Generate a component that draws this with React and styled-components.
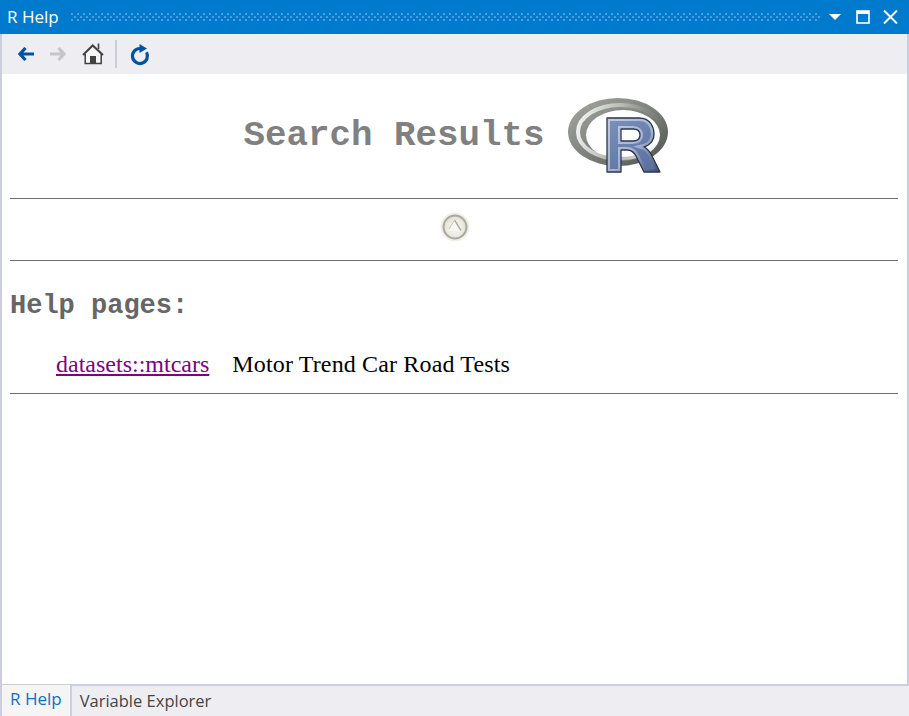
import React from "react";
import styled, { createGlobalStyle } from "styled-components";

const Global = createGlobalStyle`
  html, body { margin: 0; padding: 0; background: #fff; }
  #root { width: 909px; height: 716px; overflow: hidden; }
`;

const Window = styled.div`
  width: 909px;
  height: 716px;
  display: flex;
  flex-direction: column;
  background: #eeeef2;
  font-family: "Open Sans", "Noto Sans", sans-serif;
`;

const TitleBar = styled.div`
  height: 34px;
  flex: none;
  background: #007acc;
  color: #fff;
  display: flex;
  align-items: center;
  padding: 0 11px 0 7px;
  box-sizing: border-box;
`;

const TitleText = styled.div`
  font-size: 17px;
  line-height: 34px;
  margin-right: 12px;
`;

const Grip = styled.div`
  flex: 1;
  height: 9px;
  margin-right: 8px;
  background-image:
    conic-gradient(from 0deg at 2px 2px, transparent 75%, #46a0dc 0),
    conic-gradient(from 0deg at 2px 2px, transparent 75%, #46a0dc 0);
  background-size: 6px 6px, 6px 6px;
  background-position: 0 0, 3px 3px;
`;

const WinButtons = styled.div`
  display: flex;
  align-items: center;
`;

const WinButton = styled.svg`
  display: block;
  margin-left: ${(p) => p.$gap || 0}px;
`;

const Toolbar = styled.div`
  height: 40px;
  flex: none;
  display: flex;
  align-items: center;
  padding-left: 16px;
  border-left: 2px solid #ccceDB;
  border-right: 2px solid #ccceDB;
  box-sizing: border-box;
`;

const ToolIcon = styled.div`
  display: flex;
  align-items: center;
  margin-right: ${(p) => p.$gap || 0}px;
`;

const ToolSep = styled.div`
  width: 2px;
  height: 28px;
  background: #ccceDB;
  margin-right: 13px;
`;

const Content = styled.div`
  flex: 1;
  background: #fff;
  border-left: 2px solid #ccceDB;
  border-right: 2px solid #ccceDB;
  padding: 0 9px 0 8px;
  box-sizing: border-box;
`;

const Header = styled.div`
  height: 124px;
  display: flex;
  align-items: flex-start;
  justify-content: center;
  gap: 22px;
  padding-left: 4px;
  box-sizing: border-box;
`;

const Title = styled.h1`
  margin: 42px 0 0;
  font: bold 35.85px/40px "Liberation Mono", monospace;
  color: #808080;
`;

const LogoWrap = styled.div`
  margin-top: 23px;
  width: 102px;
  height: 80px;
`;

const Rule = styled.hr`
  margin: 0;
  border: 0;
  height: 1px;
  background: #6e6e6e;
`;

const TopRow = styled.div`
  height: 61px;
  display: flex;
  align-items: center;
  justify-content: center;
  padding-left: 2px;
  padding-bottom: 5px;
  box-sizing: border-box;
`;

const BadgeIcon = styled.svg`
  display: block;
  filter: blur(0.6px);
`;

const SectionTitle = styled.h2`
  margin: 0;
  padding-top: 29px;
  font: bold 27px/32px "Liberation Mono", monospace;
  color: #666;
`;

const ResultRow = styled.div`
  display: flex;
  padding: 26px 0 0 46px;
  height: 71px;
  box-sizing: border-box;
  font: 24px/32px "Liberation Serif", serif;
  color: #000;
`;

const ResultLink = styled.a`
  color: #800080;
  text-decoration: underline;
  margin-right: 23px;
`;

const ResultText = styled.span`
  letter-spacing: 0.15px;
`;

const Tabs = styled.div`
  height: 32px;
  flex: none;
  display: flex;
  border-top: 2px solid #ccceDB;
  border-left: 2px solid #ccceDB;
  box-sizing: border-box;
  background: #eeeef2;
`;

const ActiveTab = styled.div`
  font-size: 17px;
  line-height: 27px;
  margin-top: -1px;
  padding: 0 8px;
  color: #0e70c0;
  background: #f5f5f5;
  border-right: 2px solid #ccceDB;
`;

const Tab = styled.div`
  font-size: 16.5px;
  line-height: 30px;
  padding-left: 8px;
  color: #444;
`;

const R_PATH =
  "M40 21 L72 21 C84 21 87 31 87 37 C87 45 81 49 77 50 C80 51 82 54 84 57 L93 75 L77 75 L69 59 C67 55 65 53 60 53 L54 53 L54 75 L40 75 Z M54 32 L54 44 L66 44 C71 44 73 41 73 38 C73 35 71 32 66 32 Z";

const RLogo = () => (
  <svg width="102" height="80" viewBox="0 0 102 80">
    <defs>
      <linearGradient id="ring" x1="0" y1="0" x2="1" y2="1">
        <stop offset="0" stopColor="#a6a8a2" />
        <stop offset="0.5" stopColor="#7f817c" />
        <stop offset="1" stopColor="#4e504c" />
      </linearGradient>
      <linearGradient id="ringIn" x1="0" y1="0.3" x2="1" y2="0.5">
        <stop offset="0" stopColor="#f2f2f0" />
        <stop offset="0.45" stopColor="#b8bab6" />
        <stop offset="0.8" stopColor="#8a8c88" stopOpacity="0.4" />
        <stop offset="1" stopColor="#8a8c88" stopOpacity="0" />
      </linearGradient>
      <linearGradient id="rFill" x1="0" y1="0" x2="0.6" y2="1">
        <stop offset="0" stopColor="#7c92bc" />
        <stop offset="1" stopColor="#5c73a2" />
      </linearGradient>
      <linearGradient id="rEdge" x1="0" y1="0" x2="1" y2="1">
        <stop offset="0" stopColor="#c2cde2" />
        <stop offset="0.55" stopColor="#a4b2cf" />
        <stop offset="1" stopColor="#3e4d72" />
      </linearGradient>
      <clipPath id="rClip">
        <path clipRule="evenodd" d={R_PATH} />
      </clipPath>
    </defs>
    <path
      fillRule="evenodd"
      fill="url(#ring)"
      d="M1 35 A50 34 0 1 1 101 35 A50 34 0 1 1 1 35 Z M19 38 A37 25 0 1 0 93 38 A37 25 0 1 0 19 38 Z"
    />
    <ellipse cx="53" cy="35" rx="42" ry="27" fill="none" stroke="url(#ringIn)" strokeWidth="4" />
    <path fillRule="evenodd" fill="url(#rFill)" d={R_PATH} />
    <path clipPath="url(#rClip)" fill="none" stroke="url(#rEdge)" strokeWidth="6" d={R_PATH} />
    <path fill="none" stroke="#2a3550" strokeWidth="1.3" strokeLinejoin="round" d={R_PATH} />
  </svg>
);

const TopBadge = () => (
  <BadgeIcon width="30" height="30" viewBox="0 0 30 30">
    <defs>
      <radialGradient id="badge" cx="0.5" cy="0.55" r="0.55">
        <stop offset="0" stopColor="#f8f8f2" />
        <stop offset="0.7" stopColor="#e9e9de" />
        <stop offset="1" stopColor="#dcdccf" />
      </radialGradient>
    </defs>
    <circle cx="15" cy="15" r="14.5" fill="#f0f0e8" />
    <circle cx="15" cy="15" r="11.5" fill="url(#badge)" stroke="#aaaaa2" strokeWidth="2" />
    <path d="M15 8 L22 19 L8 19 Z" fill="#f6f6f2" />
    <path d="M14.5 8 L21 18.5" stroke="#a2a29a" strokeWidth="1.4" fill="none" />
    <path d="M14.5 8 L9 17" stroke="#c6c6bc" strokeWidth="1" fill="none" />
  </BadgeIcon>
);

const Arrow = ({ color, flip }) => (
  <svg width="16" height="14" viewBox="0 0 16 14" style={flip ? { transform: "scaleX(-1)" } : undefined}>
    <path d="M7.5 1 L2 7 L7.5 13 M2 7 L16 7" fill="none" stroke={color} strokeWidth="3.2" />
  </svg>
);

const Home = () => (
  <svg width="22" height="22" viewBox="0 0 22 22">
    <path d="M3 10.5 L3 20.5 L19.5 20.5 L19.5 10.5 L11 3 Z" fill="#f6f6f6" />
    <path d="M1 12 L10.7 2.5 L21 12" fill="none" stroke="#424242" strokeWidth="2" />
    <path d="M16.5 0.5 L16.5 6" stroke="#424242" strokeWidth="1.6" />
    <path d="M3.2 11 L3.2 20.5 L19.2 20.5 L19.2 11" fill="none" stroke="#424242" strokeWidth="1.5" />
    <rect x="8" y="13" width="6" height="8" fill="#424242" />
  </svg>
);

const Refresh = () => (
  <svg width="20" height="23" viewBox="0 0 20 23">
    <path d="M10 5.5 A7.5 7.5 0 1 0 16.5 9.3" fill="none" stroke="#00539c" strokeWidth="3.2" />
    <path d="M9.5 1 L17 5.5 L9.5 10 Z" fill="#00539c" />
  </svg>
);

export default function App() {
  return (
    <Window>
      <Global />
      <TitleBar>
        <TitleText>R Help</TitleText>
        <Grip />
        <WinButtons>
          <WinButton width="12" height="6" viewBox="0 0 12 6">
            <path d="M0 0 L12 0 L6 6 Z" fill="#fff" />
          </WinButton>
          <WinButton $gap={15} width="14" height="14" viewBox="0 0 14 14">
            <rect x="1" y="1" width="12" height="12" fill="none" stroke="#fff" strokeWidth="1.6" />
            <rect x="1" y="1" width="12" height="3" fill="#fff" />
          </WinButton>
          <WinButton $gap={13} width="15" height="14" viewBox="0 0 15 14">
            <path d="M1 0.5 L14 13.5 M14 0.5 L1 13.5" stroke="#fff" strokeWidth="2" />
          </WinButton>
        </WinButtons>
      </TitleBar>
      <Toolbar>
        <ToolIcon $gap={16}>
          <Arrow color="#00539c" />
        </ToolIcon>
        <ToolIcon $gap={16}>
          <Arrow color="#c6c6c6" flip />
        </ToolIcon>
        <ToolIcon $gap={11}>
          <Home />
        </ToolIcon>
        <ToolSep />
        <ToolIcon>
          <Refresh />
        </ToolIcon>
      </Toolbar>
      <Content>
        <Header>
          <Title>Search Results</Title>
          <LogoWrap>
            <RLogo />
          </LogoWrap>
        </Header>
        <Rule />
        <TopRow>
          <TopBadge />
        </TopRow>
        <Rule />
        <SectionTitle>Help pages:</SectionTitle>
        <ResultRow>
          <ResultLink href="#">datasets::mtcars</ResultLink>
          <ResultText>Motor Trend Car Road Tests</ResultText>
        </ResultRow>
        <Rule />
      </Content>
      <Tabs>
        <ActiveTab>R Help</ActiveTab>
        <Tab>Variable Explorer</Tab>
      </Tabs>
    </Window>
  );
}
